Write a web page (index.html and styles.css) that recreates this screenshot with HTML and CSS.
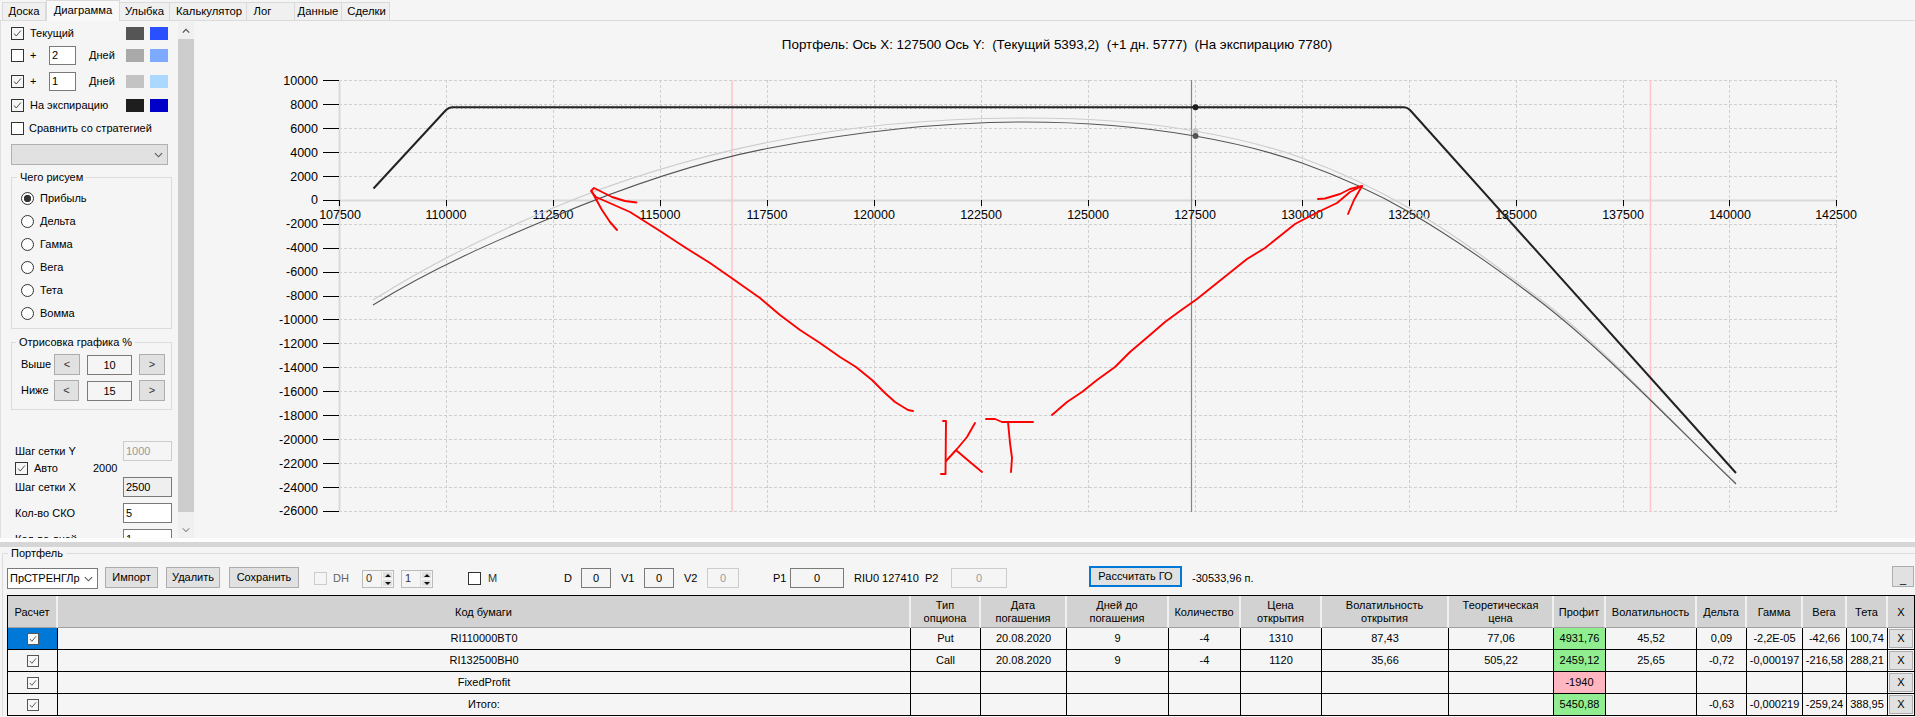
FILE: index.html
```html
<!DOCTYPE html>
<html lang="ru">
<head>
<meta charset="utf-8">
<title>Портфель</title>
<link rel="stylesheet" href="styles.css">
</head>
<body>
<svg class="defs" width="0" height="0" aria-hidden="true">
  <symbol id="chk" viewBox="0 0 13 13"><path d="M2.5 6.5 5 9.5 10.5 3" fill="none" stroke="#444" stroke-width="1.1"/></symbol>
  <symbol id="chev-d" viewBox="0 0 10 6"><path d="M1 1 5 5 9 1" fill="none" stroke="#555" stroke-width="1.2"/></symbol>
  <symbol id="chev-u" viewBox="0 0 10 6"><path d="M1 5 5 1 9 5" fill="none" stroke="#555" stroke-width="1.6"/></symbol>
</svg>

<nav class="tabs">
  <div class="tab w-doska">Доска</div>
  <div class="tab tab-on w-diag">Диаграмма</div>
  <div class="tab w-smile">Улыбка</div>
  <div class="tab w-calc">Калькулятор</div>
  <div class="tab w-log">Лог</div>
  <div class="tab w-data">Данные</div>
  <div class="tab w-deals">Сделки</div>
</nav>

<main class="main">
  <aside class="side">
    <div class="row r1"><span class="cb on"><svg><use href="#chk"/></svg></span><span class="lbl ml6">Текущий</span><span class="sw c-a sw-first"></span><span class="sw c-b"></span></div>
    <div class="row r2"><span class="cb"></span><span class="lbl plus">+</span><div class="inp num">2</div><span class="lbl days">Дней</span><span class="sw c-c sw-first"></span><span class="sw c-d"></span></div>
    <div class="row r3"><span class="cb on"><svg><use href="#chk"/></svg></span><span class="lbl plus">+</span><div class="inp num">1</div><span class="lbl days">Дней</span><span class="sw c-e sw-first"></span><span class="sw c-f"></span></div>
    <div class="row r4"><span class="cb on"><svg><use href="#chk"/></svg></span><span class="lbl ml6">На экспирацию</span><span class="sw c-g sw-first"></span><span class="sw c-h"></span></div>
    <div class="row r5"><span class="cb"></span><span class="lbl ml5">Сравнить со стратегией</span></div>
    <div class="combo-off"><svg class="chev"><use href="#chev-d"/></svg></div>

    <fieldset class="grp g1">
      <legend class="lg lg1">Чего рисуем</legend>
      <div class="rad"><span class="dot sel"></span>Прибыль</div>
      <div class="rad"><span class="dot"></span>Дельта</div>
      <div class="rad"><span class="dot"></span>Гамма</div>
      <div class="rad"><span class="dot"></span>Вега</div>
      <div class="rad"><span class="dot"></span>Тета</div>
      <div class="rad"><span class="dot"></span>Вомма</div>
    </fieldset>

    <fieldset class="grp g2">
      <legend class="lg lg2">Отрисовка графика %</legend>
      <div class="step"><span class="step-l">Выше</span><button class="btn st-b">&lt;</button><div class="inp st-i">10</div><button class="btn st-b">&gt;</button></div>
      <div class="step"><span class="step-l">Ниже</span><button class="btn st-b st-n">&lt;</button><div class="inp st-i st-in">15</div><button class="btn st-b">&gt;</button></div>
    </fieldset>

    <div class="param p-y"><span>Шаг сетки Y</span><div class="inp pi off">1000</div></div>
    <div class="auto"><span class="cb on"><svg><use href="#chk"/></svg></span><span class="auto-l">Авто</span><span>2000</span></div>
    <div class="param p-x"><span>Шаг сетки X</span><div class="inp pi grey">2500</div></div>
    <div class="param p-s"><span>Кол-во СКО</span><div class="inp pi white">5</div></div>
    <div class="param p-s"><span>Кол-во дней</span><div class="inp pi white">1</div></div>
  </aside>

  <div class="vscroll">
    <div class="vbtn"><svg class="vchev"><use href="#chev-u"/></svg></div>
    <div class="vthumb"></div>
    <div class="vbtn vend"><svg class="vchev"><use href="#chev-d"/></svg></div>
  </div>

  <svg class="chart" viewBox="194 21 1721 517" width="1721" height="517">
    <text class="ttl" x="1057" y="49" xml:space="preserve">Портфель: Ось X: 127500 Ось Y:  (Текущий 5393,2)  (+1 дн. 5777)  (На экспирацию 7780)</text>
    <path class="grid" d="M339 80.5H1837M339 104.5H1837M339 128.5H1837M339 152.5H1837M339 176.5H1837M339 224.5H1837M339 248.5H1837M339 272.5H1837M339 296.5H1837M339 319.5H1837M339 343.5H1837M339 367.5H1837M339 391.5H1837M339 415.5H1837M339 439.5H1837M339 463.5H1837M339 487.5H1837M339 511.5H1837M446.5 80V512M553.5 80V512M660.5 80V512M767.5 80V512M874.5 80V512M981.5 80V512M1088.5 80V512M1195.5 80V512M1302.5 80V512M1409.5 80V512M1516.5 80V512M1623.5 80V512M1729.5 80V512M1836.5 80V512"/>
    <path class="axis" d="M339.5 80V512M339 200.5H1837"/>
    <path class="pink" d="M732 80V512M1650.5 80V512"/>
    <path class="cursor" d="M1191.5 80V512"/>
    <path class="tick" d="M323 80.5H339M323 104.5H339M323 128.5H339M323 152.5H339M323 176.5H339M323 200.5H339M323 224.5H339M323 248.5H339M323 272.5H339M323 296.5H339M323 319.5H339M323 343.5H339M323 367.5H339M323 391.5H339M323 415.5H339M323 439.5H339M323 463.5H339M323 487.5H339M323 511.5H339M339.5 200V206M446.5 200V206M553.5 200V206M660.5 200V206M767.5 200V206M874.5 200V206M981.5 200V206M1088.5 200V206M1195.5 200V206M1302.5 200V206M1409.5 200V206M1516.5 200V206M1623.5 200V206M1729.5 200V206M1836.5 200V206"/>

    <g class="yl">
      <text x="318" y="85">10000</text><text x="318" y="109">8000</text><text x="318" y="133">6000</text><text x="318" y="157">4000</text><text x="318" y="181">2000</text><text x="318" y="204">0</text><text x="318" y="228">-2000</text><text x="318" y="252">-4000</text><text x="318" y="276">-6000</text><text x="318" y="300">-8000</text><text x="318" y="324">-10000</text><text x="318" y="348">-12000</text><text x="318" y="372">-14000</text><text x="318" y="396">-16000</text><text x="318" y="420">-18000</text><text x="318" y="444">-20000</text><text x="318" y="468">-22000</text><text x="318" y="492">-24000</text><text x="318" y="515">-26000</text>
    </g>
    <g class="xl">
      <text x="340" y="219">107500</text><text x="446" y="219">110000</text><text x="553" y="219">112500</text><text x="660" y="219">115000</text><text x="767" y="219">117500</text><text x="874" y="219">120000</text><text x="981" y="219">122500</text><text x="1088" y="219">125000</text><text x="1195" y="219">127500</text><text x="1302" y="219">130000</text><text x="1409" y="219">132500</text><text x="1516" y="219">135000</text><text x="1623" y="219">137500</text><text x="1730" y="219">140000</text><text x="1836" y="219">142500</text>
    </g>

    <path class="c-light" d="M373 300C433 262.2 493 233.2 553 208C625.3 177.6 697.7 156.5 770 142C855 125 940 118 1025 118C1081.7 118 1138.3 121 1195 131C1230.7 137.2 1266.3 145.1 1302 158C1337.7 170.9 1373.3 187.6 1409 208C1452.7 232.9 1496.3 266.2 1540 299C1605.3 348 1670.7 422.3 1736 483"/>
    <path class="c-cur" d="M373 305C433 267.8 493 242 553 217C625.3 186.8 697.7 161.7 770 148C855 131.9 940 122 1025 122C1081.7 122 1138.3 126.2 1195 136C1230.7 142.2 1266.3 150.3 1302 163C1337.7 175.7 1373.3 191.3 1409 212C1451.7 236.8 1494.3 266.5 1537 299C1603.3 349.4 1669.7 420.4 1736 484"/>
    <path class="c-exp" d="M373.5 188.5 446 110Q449 107.5 452 107.3H1404Q1407 107.3 1410 110L1736 473"/>
    <path class="c-exp-t" d="M452 107.3H1404"/>
    <circle class="m-light" cx="1195.5" cy="131" r="3"/>
    <circle class="m-cur" cx="1195.5" cy="136" r="3"/>
    <circle class="m-exp" cx="1195.5" cy="107.3" r="3"/>

    <g class="red">
      <polyline points="636.5,202.5 625,201 612,197 594,188 591,191 596,197 630,212 660,231 686,248 710,263 733,279 760,298 780,315 800,330 820,343 840,357 856,367 872,380 885,393 895,402 908,410 913,411"/>
      <polyline points="592,192 602,210 610,222 617,230"/>
      <polyline points="1052,415 1067,402 1082,392 1097,380 1115,367 1130,352 1150,335 1165,322 1180,311 1197,299 1227,275 1247,259 1265,248 1280,236 1295,224 1316,213 1337,203 1350,192 1362,186"/>
      <polyline points="1318,199 1325,198.5 1340,194 1350,189 1362,186 1354,200 1348,214"/>
      <polyline points="943,421 946,421 945.5,474 941,474"/>
      <polyline points="946,461 957,449 967,437 975,423"/>
      <polyline points="957,451 970,462 982,472"/>
      <polyline points="986,419 995,419 1002,422 1033,422"/>
      <polyline points="1008,422 1010,443 1012,458 1011,472"/>
    </g>
  </svg>
</main>

<div class="strip"></div>
<div class="split"></div>

<fieldset class="pf">
  <legend class="lg pf-lg">Портфель</legend>
  <div class="bar">
    <div class="inp tb-combo">ПрСТРЕНГЛр<svg class="chev"><use href="#chev-d"/></svg></div>
    <button class="btn tb-a">Импорт</button>
    <button class="btn tb-b">Удалить</button>
    <button class="btn tb-c">Сохранить</button>
    <span class="cb dis tb-dh"></span><span class="mut tb-dhl">DH</span>
    <div class="spin tb-s0"><span>0</span><span class="sp"><i class="up"></i><i class="dn"></i></span></div>
    <div class="spin tb-s1"><span>1</span><span class="sp"><i class="up"></i><i class="dn"></i></span></div>
    <span class="cb tb-m"></span><span class="tb-ml">M</span>
    <span class="tb-d">D</span><div class="inp ctr tb-di">0</div>
    <span class="tb-v1">V1</span><div class="inp ctr tb-vi">0</div>
    <span class="tb-v2">V2</span><div class="inp ctr off tb-v2i">0</div>
    <span class="tb-p1">P1</span><div class="inp ctr tb-p1i">0</div>
    <span class="tb-riu">RIU0 127410</span>
    <span class="tb-p2">P2</span><div class="inp ctr off tb-p2i">0</div>
    <button class="btn btn-focus">Рассчитать ГО</button>
    <span class="tb-go">-30533,96 п.</span>
    <button class="btn tb-min">_</button>
  </div>

  <table class="grid-t">
    <colgroup>
      <col class="k1"><col class="k2"><col class="k3"><col class="k4"><col class="k5"><col class="k6"><col class="k7"><col class="k8"><col class="k9"><col class="k10"><col class="k11"><col class="k12"><col class="k13"><col class="k14"><col class="k15"><col class="k16">
    </colgroup>
    <thead>
      <tr><th>Расчет</th><th>Код бумаги</th><th>Тип<br>опциона</th><th>Дата<br>погашения</th><th>Дней до<br>погашения</th><th>Количество</th><th>Цена<br>открытия</th><th>Волатильность<br>открытия</th><th>Теоретическая<br>цена</th><th>Профит</th><th>Волатильность</th><th>Дельта</th><th>Гамма</th><th>Вега</th><th>Тета</th><th>X</th></tr>
    </thead>
    <tbody>
      <tr class="first"><td class="cell-sel"><span class="cb mini"><svg><use href="#chk"/></svg></span></td><td>RI110000BT0</td><td>Put</td><td>20.08.2020</td><td>9</td><td>-4</td><td>1310</td><td>87,43</td><td>77,06</td><td class="gain">4931,76</td><td>45,52</td><td>0,09</td><td>-2,2E-05</td><td>-42,66</td><td>100,74</td><td class="x"><button class="btn x-b">X</button></td></tr>
      <tr><td><span class="cb mini"><svg><use href="#chk"/></svg></span></td><td>RI132500BH0</td><td>Call</td><td>20.08.2020</td><td>9</td><td>-4</td><td>1120</td><td>35,66</td><td>505,22</td><td class="gain">2459,12</td><td>25,65</td><td>-0,72</td><td>-0,000197</td><td>-216,58</td><td>288,21</td><td class="x"><button class="btn x-b">X</button></td></tr>
      <tr><td><span class="cb mini"><svg><use href="#chk"/></svg></span></td><td>FixedProfit</td><td></td><td></td><td></td><td></td><td></td><td></td><td></td><td class="loss">-1940</td><td></td><td></td><td></td><td></td><td></td><td class="x"><button class="btn x-b">X</button></td></tr>
      <tr><td><span class="cb mini"><svg><use href="#chk"/></svg></span></td><td>Итого:</td><td></td><td></td><td></td><td></td><td></td><td></td><td></td><td class="gain">5450,88</td><td></td><td>-0,63</td><td>-0,000219</td><td>-259,24</td><td>388,95</td><td class="x"><button class="btn x-b">X</button></td></tr>
    </tbody>
  </table>
</fieldset>
</body>
</html>
```

FILE: styles.css
```css
* { box-sizing: border-box; }
html, body { margin: 0; padding: 0; }
body {
  width: 1915px; height: 717px; overflow: hidden;
  background: #f5f5f5; color: #000;
  font: 11px/13px "Liberation Sans", Arial, sans-serif;
}
.defs { position: absolute; }

/* tabs */
.tabs { display: flex; height: 21px; padding-left: 2px; border-bottom: 1px solid #dadada; }
.tab {
  height: 18px; margin-top: 2px; line-height: 17px; text-align: center;
  background: #f0f0f0; border: 1px solid #dadada; border-left: 0; border-bottom: 0;
  font-size: 11.3px;
}
.w-doska { width: 44px; border-left: 1px solid #dadada; }
.tab-on { margin-top: 0; height: 21px; line-height: 19px; background: #f8f8f8; border-left: 1px solid #dadada; }
.w-diag { width: 74px; }
.w-smile { width: 50px; }
.w-calc { width: 77px; padding-left: 2px; }
.w-log { width: 48px; padding-right: 16px; }
.w-data { width: 47px; }
.w-deals { width: 48px; padding-left: 2px; }

/* main */
.main { display: flex; height: 517px; }
.side { width: 178px; height: 517px; overflow: hidden; padding: 3px 0 0 10px; border-left: 1px solid #e0e0e0; }
.row { display: flex; align-items: center; height: 19px; width: 157px; }
.r2 { margin-top: 3px; }
.r3 { margin-top: 7px; }
.r4 { margin-top: 5px; }
.r5 { margin-top: 4px; }
.lbl { white-space: nowrap; }
.ml6 { margin-left: 6px; }
.ml5 { margin-left: 5px; }
.plus { margin-left: 6px; width: 19px; }
.days { margin-left: 13px; }
.num { width: 27px; height: 19px; padding-left: 2px; line-height: 17px; background: #fff; }
.sw { width: 18px; height: 13px; margin-left: 6px; flex: none; }
.sw-first { margin-left: auto; }
.c-a { background: #555; } .c-b { background: #2a4fff; }
.c-c { background: #a9a9a9; } .c-d { background: #7daaff; }
.c-e { background: #c3c3c3; } .c-f { background: #aad8ff; }
.c-g { background: #1e1e1e; } .c-h { background: #0000c8; }

.cb { display: inline-block; flex: none; width: 13px; height: 13px; border: 1px solid #333; background: #fff; }
.cb.on { background: #f5f5f5; }
.cb svg { display: block; width: 11px; height: 11px; }
.cb.dis { border-color: #ccc; background: #f5f5f5; }
.cb.mini { width: 12px; height: 12px; border-color: #555; background: #f8f8f8; vertical-align: middle; }
.cb.mini svg { width: 10px; height: 10px; }

.inp { border: 1px solid #7a7a7a; flex: none; }
.inp.off { border-color: #ccc; color: #999; }
.ctr { text-align: center; line-height: 18px; }

.combo-off { display: flex; align-items: center; justify-content: flex-end; width: 157px; height: 21px; margin-top: 6px; padding-right: 4px; background: #e1e1e1; border: 1px solid #b0b0b0; }
.chev { width: 9px; height: 6px; flex: none; }

.grp { margin: 0; padding: 0; width: 161px; border: 1px solid #dcdcdc; min-width: 0; }
.lg { padding: 0 3px; height: 13px; white-space: nowrap; }
.lg1 { margin-left: -4px; }
.lg2 { margin-left: -5px; }
.g1 { margin-top: 6px; padding: 8px 0 8px 9px; }
.rad { display: flex; align-items: center; height: 13px; margin-bottom: 10px; }
.rad:last-child { margin-bottom: 0; }
.dot { width: 13px; height: 13px; margin-right: 6px; border: 1px solid #333; border-radius: 50%; background: #fff; }
.dot.sel { background: radial-gradient(circle, #333 0, #333 3.4px, #fff 4px); }

.g2 { margin-top: 7px; padding: 5px 0 8px 9px; }
.step { display: flex; align-items: center; height: 21px; margin-bottom: 5px; }
.step:last-child { margin-bottom: 0; }
.step-l { width: 33px; }
.btn { margin: 0; padding: 0; background: #e1e1e1; border: 1px solid #adadad; color: #000; font: 11px/13px "Liberation Sans", Arial, sans-serif; }
.st-b { width: 26px; height: 21px; color: #333; }
.st-i { width: 45px; height: 20px; margin: 0 7px; text-align: center; line-height: 18px; }
.st-n { width: 25px; }
.st-in { margin-left: 8px; }

.param { display: flex; justify-content: space-between; align-items: center; height: 20px; width: 161px; padding-left: 4px; }
.p-y { margin-top: 31px; }
.p-x { margin-top: 2px; }
.p-s { margin-top: 6px; }
.pi { width: 49px; height: 20px; padding-left: 2px; line-height: 18px; }
.grey { background: #efefef; }
.white { background: #fff; }
.auto { display: flex; align-items: center; height: 14px; padding-left: 4px; }
.auto-l { margin-left: 6px; width: 59px; }

.vscroll { display: flex; flex-direction: column; width: 16px; height: 516px; margin-top: 1px; background: #f0f0f0; }
.vbtn { display: flex; align-items: center; justify-content: center; height: 17px; flex: none; }
.vend { margin-top: auto; }
.vchev { width: 8px; height: 6px; }
.vthumb { height: 473px; background: #cdcdcd; flex: none; }

/* chart */
.chart { display: block; flex: none; font-family: "Liberation Sans", Arial, sans-serif; font-size: 12.5px; }
.ttl { text-anchor: middle; font-size: 13.4px; }
.yl text { text-anchor: end; }
.xl text { text-anchor: middle; }
.grid { fill: none; stroke: #cfcfcf; stroke-width: 1; stroke-dasharray: 3 2; }
.axis { fill: none; stroke: #d9d9d9; stroke-width: 2; }
.tick { fill: none; stroke: #000; stroke-width: 1; }
.pink { fill: none; stroke: #ffc4ce; stroke-width: 1.5; }
.cursor { fill: none; stroke: #7d8794; stroke-width: 1.2; }
.c-light { fill: none; stroke: #cdcdcd; stroke-width: 1.2; }
.c-cur { fill: none; stroke: #555; stroke-width: 1.1; }
.c-exp { fill: none; stroke: #222; stroke-width: 2; stroke-linejoin: round; }
.c-exp-t { fill: none; stroke: #444; stroke-width: 3.5; stroke-dasharray: 1 3.45; opacity: .55; }
.m-light { fill: #c8c8c8; }
.m-cur { fill: #555; }
.m-exp { fill: #1e1e1e; }
.red polyline { fill: none; stroke: #f00; stroke-width: 1.9; stroke-linejoin: round; stroke-linecap: round; }

/* splitter */
.strip { height: 4px; background: #fdfdfd; }
.split { height: 5px; background: #d6d6d6; }

/* portfolio */
.pf { margin: 0 0 0 2px; padding: 6px 1px 0 4px; width: 1913px; min-width: 0; border: 1px solid #dcdcdc; border-right: 0; border-bottom: 0; }
.pf-lg { margin-left: 1px; }
.bar { display: flex; align-items: flex-start; height: 23px; margin-bottom: 6px; white-space: nowrap; }
.bar > span { line-height: 20px; margin-top: 2px; }
.tb-combo { display: flex; align-items: center; justify-content: space-between; width: 91px; height: 21px; margin-top: 2px; padding: 0 4px 0 2px; background: #fff; }
.tb-a { width: 53px; height: 21px; margin: 1px 0 0 7px; }
.tb-b { width: 54px; height: 21px; margin: 1px 0 0 8px; }
.tb-c { width: 70px; height: 21px; margin: 1px 0 0 9px; }
.bar > .tb-dh { width: 13px; height: 13px; margin: 6px 0 0 15px; }
.tb-dhl { width: 15px; margin-left: 6px; }
.mut { color: #666; }
.spin { display: flex; justify-content: space-between; width: 32px; height: 18px; margin-top: 4px; padding-left: 3px; border: 1px solid #bbb; color: #333; line-height: 15px; }
.tb-s0 { margin-left: 14px; }
.tb-s1 { margin-left: 7px; }
.sp { display: flex; flex-direction: column; width: 12px; border-left: 1px solid #ddd; }
.sp i { display: flex; align-items: center; justify-content: center; height: 8px; background: #e1e1e1; border: 1px solid #f5f5f5; }
.sp .up::after { content: ""; border: 3px solid transparent; border-top: 0; border-bottom: 3px solid #111; }
.sp .dn::after { content: ""; border: 3px solid transparent; border-bottom: 0; border-top: 3px solid #111; }
.bar > .tb-m { width: 13px; height: 13px; margin: 6px 0 0 35px; }
.tb-ml { width: 8px; margin-left: 7px; color: #333; }
.tb-d { width: 7px; margin-left: 68px; }
.tb-di { width: 30px; height: 20px; margin: 2px 0 0 10px; }
.tb-v1 { width: 13px; margin-left: 10px; }
.tb-vi { width: 30px; height: 20px; margin: 2px 0 0 10px; }
.tb-v2 { width: 13px; margin-left: 10px; }
.tb-v2i { width: 32px; height: 20px; margin: 2px 0 0 10px; }
.tb-p1 { width: 12px; margin-left: 34px; }
.tb-p1i { width: 54px; height: 20px; margin: 2px 0 0 5px; }
.tb-riu { width: 64px; margin-left: 10px; }
.tb-p2 { width: 13px; margin-left: 7px; }
.tb-p2i { width: 56px; height: 20px; margin: 2px 0 0 13px; }
.btn-focus { width: 93px; height: 21px; margin-left: 82px; border: 2px solid #0078d7; }
.tb-go { margin-left: 10px; }
.tb-min { width: 22px; height: 21px; margin-left: auto; padding-top: 5px; }

/* table */
.grid-t { table-layout: fixed; width: 1907px; border-collapse: separate; border-spacing: 0; border: 1px solid #000; border-bottom: 0; font-size: 11px; }
.k1 { width: 50px; } .k2 { width: 853px; } .k3 { width: 70px; } .k4 { width: 86px; }
.k5 { width: 102px; } .k6 { width: 72px; } .k7 { width: 81px; } .k8 { width: 127px; }
.k9 { width: 105px; } .k10 { width: 52px; } .k11 { width: 91px; } .k12 { width: 50px; }
.k13 { width: 56px; } .k14 { width: 44px; } .k15 { width: 41px; } .k16 { width: 26px; }
.grid-t th { height: 32px; padding: 1px 0 0; font-weight: 400; line-height: 13px; text-align: center; background: #d2d2d2; border-right: 2px solid #f0f0f0; border-bottom: 1px solid #a0a0a0; white-space: nowrap; }
.grid-t th:last-child { border-right: 0; }
.grid-t td { height: 22px; padding: 0; text-align: center; line-height: 13px; border-right: 1px solid #000; border-bottom: 1px solid #000; white-space: nowrap; overflow: hidden; }
.grid-t td:last-child { border-right: 0; }
.grid-t .first td { height: 21px; }
.cell-sel { background: #0078d7; }
.gain { background: #90ee90; }
.loss { background: #ffb6c1; }
.grid-t td.x { padding: 1px; }
.x-b { display: block; width: 100%; height: 100%; min-height: 19px; }
```
